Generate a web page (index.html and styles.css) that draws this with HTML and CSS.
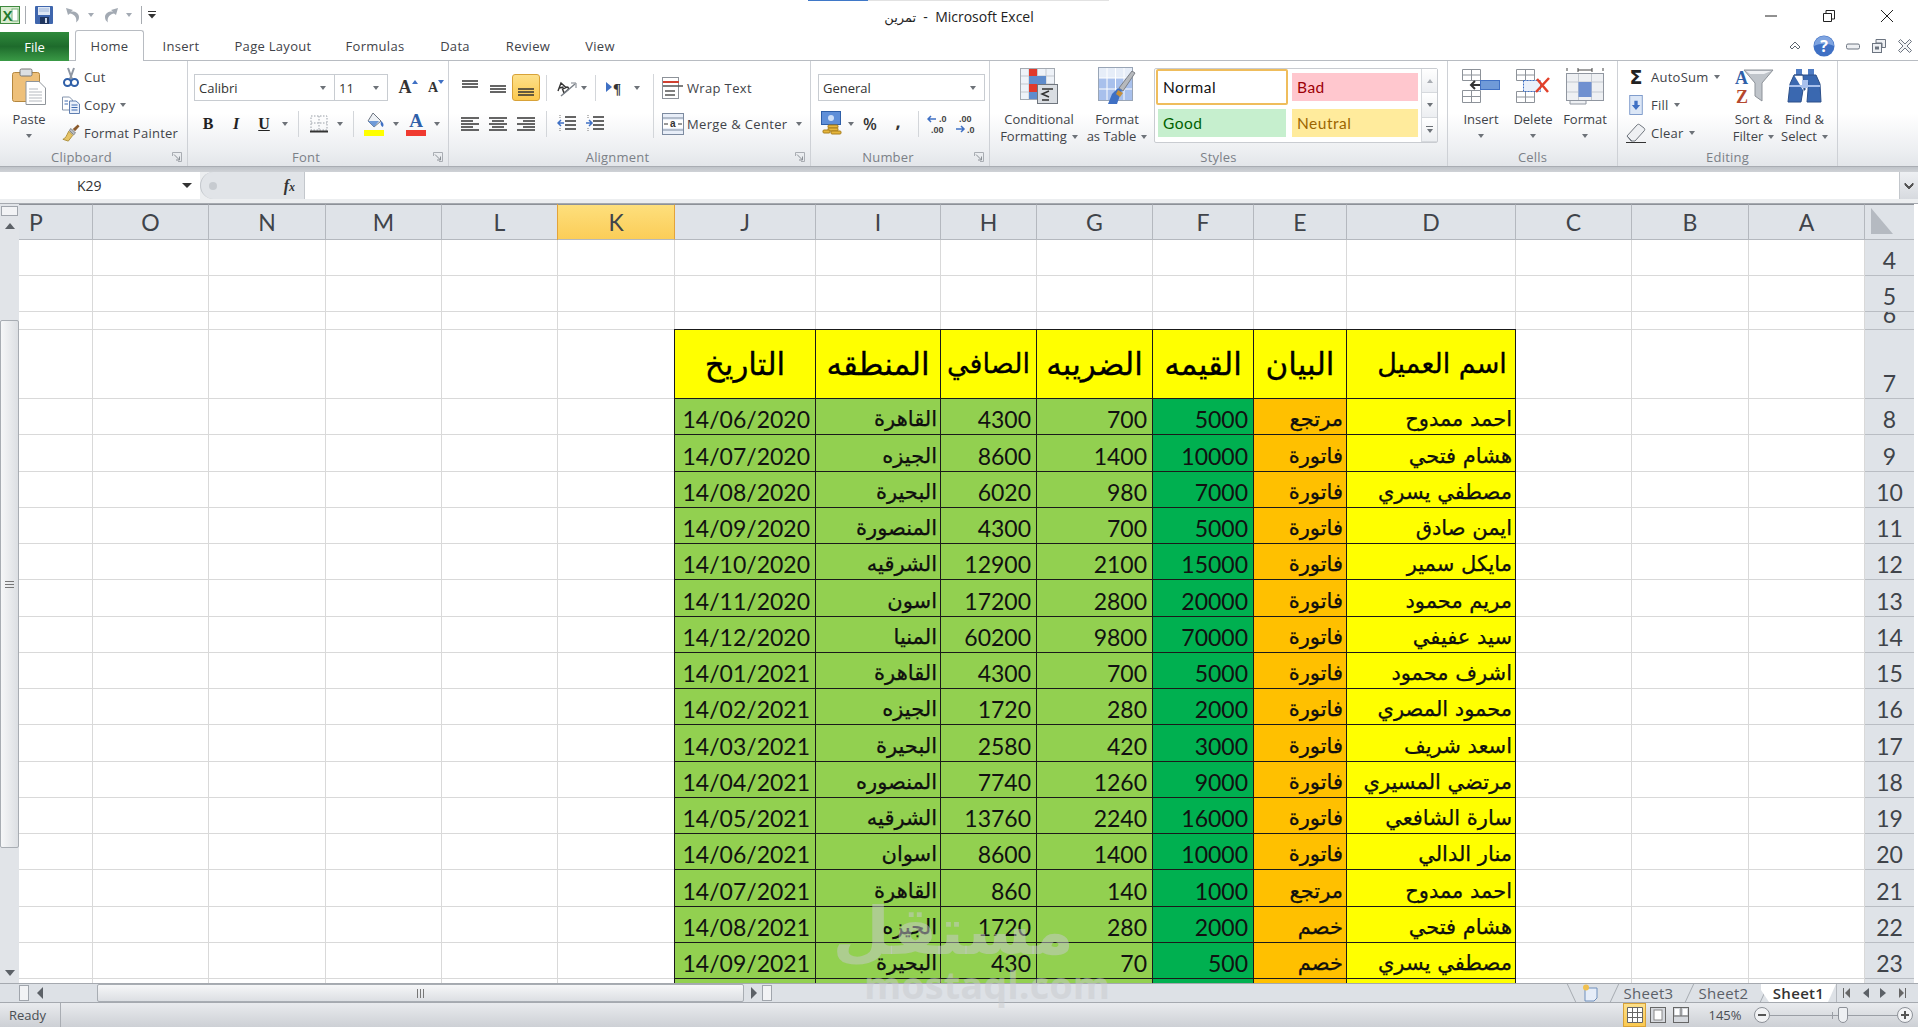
FILE: index.html
```html
<!DOCTYPE html>
<html lang="en">
<head>
<meta charset="UTF-8">
<title>تمرين - Microsoft Excel</title>
<link rel="stylesheet" href="styles.css">
</head>
<body>

<!-- shared small icons -->
<svg class="defs">
  <symbol id="launcher" viewBox="0 0 10 10"><path d="M.5 4V.5H9.500V9.500H6" fill="none" stroke="#a9adb3"/><path d="M2 2.500L7.500 8M7.500 4.500V8H4" fill="none" stroke="#8b9096"/></symbol>
  <symbol id="al-left" viewBox="0 0 20 16"><path d="M1 2H19M1 5H13M1 8H19M1 11H13M1 14H19" stroke="#333" stroke-width="1.400"/></symbol>
  <symbol id="al-center" viewBox="0 0 20 16"><path d="M1 2H19M4 5H16M1 8H19M4 11H16M1 14H19" stroke="#333" stroke-width="1.400"/></symbol>
  <symbol id="al-right" viewBox="0 0 20 16"><path d="M1 2H19M7 5H19M1 8H19M7 11H19M1 14H19" stroke="#333" stroke-width="1.400"/></symbol>
</svg>

<div class="load-strip"><div class="load-strip-bar"></div></div>
<header class="titlebar">
  <div class="qat">
    <svg class="qat-logo" viewBox="0 0 20 18"><rect x=".5" y=".5" width="19" height="17" fill="#d8ecd0" stroke="#3f8a3f"/><rect x="12" y="3" width="6" height="12" fill="#fff" stroke="#7ab07a"/><text x="7.500" y="15" class="qat-logo-x">X</text></svg>
    <span class="qat-sep"></span>
    <svg class="qat-save" viewBox="0 0 18 18"><rect width="18" height="18" rx="1" fill="#3f66ad"/><rect x="3" y="1" width="12" height="8" fill="#dfe8f5"/><path d="M4 3H14M4 5H14" stroke="#9db4d8"/><rect x="5" y="11" width="9" height="7" fill="#20355e"/><rect x="10" y="12" width="2" height="5" fill="#cfd8e8"/></svg>
    <svg class="qat-undo" viewBox="0 0 16 16"><path d="M3 8L1 1L8 3L6 4.500C10 4 14 6 14 10C14 12.500 13 14 11 15.500C12 12.500 11 7.500 5 6.500Z" fill="#a3aab3"/></svg>
    <i class="dd dd-light qat-dd"></i>
    <svg class="qat-redo" viewBox="0 0 16 16"><path d="M13 8L15 1L8 3L10 4.500C6 4 2 6 2 10C2 12.500 3 14 5 15.500C4 12.500 5 7.500 11 6.500Z" fill="#a3aab3"/></svg>
    <i class="dd dd-light qat-dd"></i>
    <span class="qat-sep qat-sep-b"></span>
    <svg class="qat-more" viewBox="0 0 9 8"><path d="M0 .5H8" stroke="#333"/><path d="M0 3H8L4 7.500Z" fill="#333"/></svg>
  </div>
  <div class="doc-title"><span dir="rtl" class="doc-name">تمرين</span>&nbsp; - &nbsp;Microsoft Excel</div>
  <div class="win-controls">
    <span class="win-btn"><svg viewBox="0 0 12 12"><path d="M0 6H12" stroke="#222"/></svg></span>
    <span class="win-btn"><svg viewBox="0 0 12 12"><path d="M.5 3.500H8.500V11.500H.5ZM3 3.500V.5H11.500V9H8.500" fill="none" stroke="#222"/></svg></span>
    <span class="win-btn"><svg viewBox="0 0 12 12"><path d="M0 0L12 12M12 0L0 12" stroke="#222"/></svg></span>
  </div>
</header>

<nav class="tabs">
  <div class="tab-file">File</div>
  <div class="tab tab-home">Home</div>
  <div class="tab tab-insert">Insert</div>
  <div class="tab tab-layout">Page Layout</div>
  <div class="tab tab-formulas">Formulas</div>
  <div class="tab tab-data">Data</div>
  <div class="tab tab-review">Review</div>
  <div class="tab tab-view">View</div>
  <div class="tabs-right">
    <svg class="ic16" viewBox="0 0 16 16"><path d="M3 9L8 4L13 9L11 11L8 8L5 11Z" fill="#fff" stroke="#5c6670"/></svg>
    <svg class="ic-help" viewBox="0 0 22 22"><circle cx="11" cy="11" r="10.500" fill="#3f70c4"/><path d="M1 11A10 10 0 0 1 21 11C15 8 7 8 1 11Z" fill="#7fa4e0"/><text x="11" y="17" class="help-q">?</text></svg>
    <svg class="ic16" viewBox="0 0 16 16"><rect x="1.500" y="6" width="13" height="5" rx="1.500" fill="#eef0f3" stroke="#6c7480"/></svg>
    <svg class="ic16" viewBox="0 0 16 16"><path d="M5 1.500H14.500V9.500H11V5H5Z" fill="#eef0f3" stroke="#6c7480"/><rect x="1.500" y="5.500" width="9" height="9" fill="#eef0f3" stroke="#6c7480"/><rect x="4" y="8.500" width="4" height="3" fill="#6c7480"/></svg>
    <svg class="ic16" viewBox="0 0 16 16"><path d="M1.500 3.500L3.500 1.500L8 6L12.500 1.500L14.500 3.500L10 8L14.500 12.500L12.500 14.500L8 10L3.500 14.500L1.500 12.500L6 8Z" fill="#f2f3f5" stroke="#6c7480"/></svg>
  </div>
</nav>

<section class="ribbon">
  <!-- Clipboard -->
  <div class="grp grp-clipboard">
    <div class="grp-body">
      <div class="big big-paste">
        <div class="big-icon">
          <svg width="34" height="37" viewBox="0 0 34 37"><rect x=".5" y="4.500" width="27" height="29" rx="2" fill="#eec07a" stroke="#b4873f"/><rect x="8" y="1" width="12" height="7" rx="1.500" fill="#dcdfe3" stroke="#777"/><path d="M14 36.500V13.500H27L33.500 20V36.500Z" fill="#fff" stroke="#8f949a"/><path d="M17 21H26M17 24H30M17 27H30M17 30H30M17 33H30" stroke="#b5b9bf"/></svg>
        </div>
        <div class="big-text">Paste</div>
        <i class="dd"></i>
      </div>
      <div class="small-list">
        <div class="small-row">
          <svg class="small-icon" viewBox="0 0 18 20"><path d="M6 1L10 12M12 1L8 12" stroke="#8f97a3" stroke-width="2"/><ellipse cx="5.500" cy="15.500" rx="3.500" ry="3.500" fill="none" stroke="#2f5fa8" stroke-width="2"/><ellipse cx="12.500" cy="15.500" rx="3.500" ry="3.500" fill="none" stroke="#2f5fa8" stroke-width="2"/></svg>
          <span>Cut</span>
        </div>
        <div class="small-row">
          <svg class="small-icon" viewBox="0 0 18 18"><path d="M.5 1H7.500L10.500 4V14H.5Z" fill="#fff" stroke="#8696ae"/><path d="M7.500 5H14L17.500 8V17.500H7.500Z" fill="#eaf0fa" stroke="#5f7eb0"/><path d="M9.500 9H15.500M9.500 11.500H15.500M9.500 14H15.500M2.500 5H6M2.500 8H6" stroke="#3f6bb0"/></svg>
          <span>Copy</span><i class="dd dd-gap"></i>
        </div>
        <div class="small-row">
          <svg class="small-icon" viewBox="0 0 20 20"><path d="M7.500 8L12 12.500L7 19L1 17C4 16 5 13 7.500 8Z" fill="#e7c466" stroke="#a88a34"/><path d="M8 7L13 12L15 10L10 5Z" fill="#b8bcc2" stroke="#777"/><path d="M12 5.500L17.500.5L19.500 2.500L14.500 8Z" fill="#8a5a2c"/></svg>
          <span>Format Painter</span>
        </div>
      </div>
    </div>
    <div class="grp-label"><span>Clipboard</span><svg class="launcher"><use href="#launcher"/></svg></div>
  </div>

  <!-- Font -->
  <div class="grp grp-font">
    <div class="grp-body grp-stack">
      <div class="tool-row">
        <div class="combo combo-font"><span>Calibri</span><i class="dd"></i></div>
        <div class="combo combo-size"><span>11</span><i class="dd"></i></div>
        <div class="tool w-grow"><span class="grow-a">A</span><i class="tick tick-up"></i></div>
        <div class="tool w-shrink"><span class="shrink-a">A</span><i class="tick tick-down"></i></div>
      </div>
      <div class="tool-row tool-row-b">
        <div class="tool w28 fmt fmt-b">B</div>
        <div class="tool w28 fmt fmt-i">I</div>
        <div class="tool w28 fmt fmt-u">U</div>
        <div class="tool w14"><i class="dd"></i></div>
        <span class="vsep"></span>
        <div class="tool w28"><svg width="18" height="18" viewBox="0 0 18 18"><path d="M1 1H17V15H1ZM9 1V15M1 8H17" fill="none" stroke="#9aa0a8" stroke-dasharray="1.500 1.500"/><path d="M0 16.500H18" stroke="#333" stroke-width="2"/></svg></div>
        <div class="tool w14"><i class="dd"></i></div>
        <span class="vsep"></span>
        <div class="tool w30"><svg width="22" height="24" viewBox="0 0 22 24"><path d="M9 1L17 9L10 15L4 9Z" fill="#eef1f5" stroke="#6c7480"/><path d="M4 9H15L10 15Z" fill="#6f9ad8"/><path d="M17 9C20 11 20 14 18.500 15C17 14 16 12 17 9Z" fill="#3f70c4"/><rect x="0" y="18" width="20" height="6" fill="#ffff00"/></svg></div>
        <div class="tool w12"><i class="dd"></i></div>
        <div class="tool w28 fc"><span class="fc-a">A</span><i class="fc-bar"></i></div>
        <div class="tool w14"><i class="dd"></i></div>
      </div>
    </div>
    <div class="grp-label"><span>Font</span><svg class="launcher"><use href="#launcher"/></svg></div>
  </div>

  <!-- Alignment -->
  <div class="grp grp-align">
    <div class="grp-body">
      <div class="grp-stack align-tools">
        <div class="tool-row">
          <div class="tool w28"><svg width="20" height="18" viewBox="0 0 20 18"><path d="M2 2H18M2 5H18M2 8H18" stroke="#333" stroke-width="1.400"/></svg></div>
          <div class="tool w28"><svg width="20" height="18" viewBox="0 0 20 18"><path d="M2 7H18M2 10H18M2 13H18" stroke="#333" stroke-width="1.400"/></svg></div>
          <div class="tool w28 tool-on"><svg width="20" height="18" viewBox="0 0 20 18"><path d="M2 10H18M2 13H18M2 16H18" stroke="#333" stroke-width="1.400"/></svg></div>
          <span class="vsep"></span>
          <div class="tool w26"><svg width="22" height="20" viewBox="0 0 22 20"><path d="M3 13L6 5L11 9.500M4.200 10L8.500 9M9 15L7.500 11L12 9C14 9 14 11.500 12 12.500Z" fill="none" stroke="#333" stroke-width="1.400"/><path d="M6 18L20 6" stroke="#7a8088" stroke-width="1.500"/><path d="M16 5H21V10" fill="none" stroke="#7a8088"/></svg></div>
          <div class="tool w10"><i class="dd"></i></div>
          <span class="vsep"></span>
          <div class="tool w28"><svg width="20" height="16" viewBox="0 0 20 16"><path d="M0 2L6 7L0 12Z" fill="#3f70c4"/><text x="7" y="14" class="pilcrow">¶</text></svg></div>
          <div class="tool w14"><i class="dd"></i></div>
        </div>
        <div class="tool-row tool-row-b">
          <div class="tool w28"><svg width="20" height="16"><use href="#al-left"/></svg></div>
          <div class="tool w28"><svg width="20" height="16"><use href="#al-center"/></svg></div>
          <div class="tool w28"><svg width="20" height="16"><use href="#al-right"/></svg></div>
          <span class="vsep"></span>
          <div class="tool w28"><svg width="20" height="20" viewBox="0 0 20 20"><path d="M8 3H19M8 7H19M8 11H19M8 15H19" stroke="#333" stroke-width="1.500"/><path d="M7 9H1M4 6L1 9L4 12" fill="none" stroke="#3f70c4" stroke-width="1.500"/><path d="M3 1V4M3 14V18" stroke="#777" stroke-dasharray="1 1"/></svg></div>
          <div class="tool w28"><svg width="20" height="20" viewBox="0 0 20 20"><path d="M8 3H19M8 7H19M8 11H19M8 15H19" stroke="#333" stroke-width="1.500"/><path d="M1 9H7M4 6L7 9L4 12" fill="none" stroke="#3f70c4" stroke-width="1.500"/><path d="M3 1V4M3 14V18" stroke="#777" stroke-dasharray="1 1"/></svg></div>
        </div>
      </div>
      <span class="vsep vsep-tall"></span>
      <div class="grp-stack align-text">
        <div class="tool-row tool-row-text">
          <svg width="22" height="22" viewBox="0 0 22 22"><rect x=".5" y=".5" width="16" height="21" fill="#fff" stroke="#8d9299"/><path d="M1 5H17" stroke="#d04030" stroke-width="2"/><path d="M1 9H21" stroke="#555" stroke-width="1.500"/><path d="M3 14H13M3 18H13" stroke="#555" stroke-width="1.500"/></svg>
          <span>Wrap Text</span>
        </div>
        <div class="tool-row tool-row-text tool-row-b">
          <svg width="22" height="22" viewBox="0 0 22 22"><rect x=".5" y=".5" width="21" height="21" fill="#e8eef8" stroke="#7d8ba0"/><path d="M1 5H21M1 17H21" stroke="#7d8ba0"/><rect x="1" y="7" width="20" height="8" fill="#fff"/><text x="11" y="14" class="merge-a">a</text><path d="M2 11H6M20 11H16" stroke="#333"/></svg>
          <span>Merge &amp; Center</span><i class="dd dd-gap"></i>
        </div>
      </div>
    </div>
    <div class="grp-label"><span>Alignment</span><svg class="launcher"><use href="#launcher"/></svg></div>
  </div>

  <!-- Number -->
  <div class="grp grp-number">
    <div class="grp-body grp-stack">
      <div class="tool-row">
        <div class="combo combo-num"><span>General</span><i class="dd"></i></div>
      </div>
      <div class="tool-row tool-row-b">
        <div class="tool w28"><svg width="22" height="25" viewBox="0 0 22 25"><rect x=".5" y=".5" width="19" height="13" fill="#5f8fd8" stroke="#2f5fa8"/><circle cx="10" cy="7" r="3" fill="#cfe0f8"/><rect x="7" y="14" width="10" height="3" rx="1" fill="#e6b63c" stroke="#a97f1c"/><rect x="7" y="17" width="10" height="3" rx="1" fill="#e6b63c" stroke="#a97f1c"/><rect x="10" y="20" width="10" height="3" rx="1" fill="#e6b63c" stroke="#a97f1c"/><rect x="2" y="19" width="7" height="3" rx="1" fill="#e6b63c" stroke="#a97f1c"/></svg></div>
        <div class="tool w10"><i class="dd"></i></div>
        <div class="tool w28 num-sym num-pct">%</div>
        <div class="tool w28 num-sym num-comma">,</div>
        <span class="vsep"></span>
        <div class="tool w28 dec"><svg width="24" height="22" viewBox="0 0 24 22"><path d="M1 6H9M4 3L1 6L4 9" fill="none" stroke="#3f70c4" stroke-width="1.500"/><text x="12" y="9" class="dec-t">.0</text><text x="4" y="20" class="dec-t">.00</text></svg></div>
        <div class="tool w28 dec"><svg width="24" height="22" viewBox="0 0 24 22"><text x="4" y="9" class="dec-t">.00</text><path d="M1 16H9M6 13L9 16L6 19" fill="none" stroke="#3f70c4" stroke-width="1.500"/><text x="12" y="20" class="dec-t">.0</text></svg></div>
      </div>
    </div>
    <div class="grp-label"><span>Number</span><svg class="launcher"><use href="#launcher"/></svg></div>
  </div>

  <!-- Styles -->
  <div class="grp grp-styles">
    <div class="grp-body">
      <div class="big big-cond">
        <div class="big-icon">
          <svg width="38" height="36" viewBox="0 0 38 36"><rect x=".5" y=".5" width="34" height="31" fill="#eef2f8" stroke="#a4aab2"/><path d="M9 1V31M17.500 1V31M26 1V31M1 8H34M1 16H34M1 24H34" stroke="#c4c9d0"/><rect x="9" y="1" width="8" height="7" fill="#e0392b"/><rect x="9" y="8" width="17" height="8" fill="#5f8ccc"/><rect x="9" y="16" width="8" height="8" fill="#e0392b"/><rect x="9" y="24" width="15" height="7" fill="#5f8ccc"/><rect x="17.500" y="16.500" width="20" height="19" fill="#d9dde2" stroke="#70767e"/><path d="M22 21L33 21M29 23L22 26L29 29M22 32H29" fill="none" stroke="#333" stroke-width="1.500"/></svg>
        </div>
        <div class="big-text">Conditional</div>
        <div class="big-text">Formatting<i class="dd dd-gap"></i></div>
      </div>
      <div class="big big-table">
        <div class="big-icon">
          <svg width="38" height="38" viewBox="0 0 38 38"><rect x=".5" y=".5" width="34" height="33" fill="#e6edf8" stroke="#99a5b6"/><rect x="1" y="11" width="33" height="22" fill="#a8c0ec"/><path d="M9 1V33M17.500 1V33M26 1V33M1 11H34M1 22H34" stroke="#fff"/><path d="M37 6L25 24L21 21L34 4Z" fill="#b6b9bd" stroke="#7b7f85"/><path d="M24 23L19 37H10L14 27L20 21Z" fill="#3f70c4"/><path d="M20 23L25 26L22 30L18 27Z" fill="#c48f3c"/></svg>
        </div>
        <div class="big-text">Format</div>
        <div class="big-text">as Table<i class="dd dd-gap"></i></div>
      </div>
      <div class="gallery">
        <div class="gallery-cells">
          <div class="style-wrap style-wrap-on"><div class="style-cell style-normal">Normal</div></div>
          <div class="style-wrap"><div class="style-cell style-bad">Bad</div></div>
          <div class="style-wrap"><div class="style-cell style-good">Good</div></div>
          <div class="style-wrap"><div class="style-cell style-neutral">Neutral</div></div>
        </div>
        <div class="gallery-scroll">
          <div class="gallery-btn"><i class="tri-up"></i></div>
          <div class="gallery-btn"><i class="dd"></i></div>
          <div class="gallery-btn gallery-more"><i class="more-line"></i><i class="dd"></i></div>
        </div>
      </div>
    </div>
    <div class="grp-label grp-label-plain"><span>Styles</span></div>
  </div>

  <!-- Cells -->
  <div class="grp grp-cells">
    <div class="grp-body">
      <div class="big big-cell">
        <div class="big-icon">
          <svg width="38" height="34" viewBox="0 0 38 34"><path d="M.5.500H18.500V11.500H.5ZM9.500.5V11.500M.5 6H18.500" fill="#fff" stroke="#8d9299"/><path d="M.5 21.500H18.500V33.500H.5ZM9.500 21.500V33.500M.5 27.500H18.500" fill="#fff" stroke="#8d9299"/><rect x="18.500" y="11.500" width="19" height="9" fill="#6f9ad8" stroke="#3f70c4"/><path d="M18 16H9M13 12L9 16L13 20" fill="none" stroke="#333" stroke-width="2"/></svg>
        </div>
        <div class="big-text">Insert</div>
        <i class="dd"></i>
      </div>
      <div class="big big-cell">
        <div class="big-icon">
          <svg width="34" height="34" viewBox="0 0 34 34"><path d="M.5.500H18.500V11.500H.5ZM9.500.5V11.500M.5 6H18.500" fill="#fff" stroke="#8d9299"/><path d="M.5 22.500H18.500V33.500H.5ZM9.500 22.500V33.500M.5 28H18.500" fill="#fff" stroke="#8d9299"/><rect x="7.500" y="11.500" width="17" height="11" fill="#eaf0fa" stroke="#3f70c4" stroke-dasharray="2 1"/><path d="M21 10L32 23M33 9L20 23" stroke="#e2402a" stroke-width="2.500"/></svg>
        </div>
        <div class="big-text">Delete</div>
        <i class="dd"></i>
      </div>
      <div class="big big-cell">
        <div class="big-icon">
          <svg width="38" height="38" viewBox="0 0 38 38"><path d="M1 1V4M37 1V4M12 3H26M12 1V5M26 1V5" stroke="#444" fill="none"/><rect x=".5" y="6.500" width="37" height="27" fill="#eef0f3" stroke="#9096a0"/><path d="M12.500 7V33M25.500 7V33M1 15H37M1 25H37" stroke="#c4c9d0"/><rect x="12.500" y="15" width="13" height="15" fill="#6f90d0"/><path d="M4 34V37H20V34" fill="#eef0f3" stroke="#9096a0"/></svg>
        </div>
        <div class="big-text">Format</div>
        <i class="dd"></i>
      </div>
    </div>
    <div class="grp-label grp-label-plain"><span>Cells</span></div>
  </div>

  <!-- Editing -->
  <div class="grp grp-editing">
    <div class="grp-body">
      <div class="small-list edit-list">
        <div class="small-row">
          <span class="small-icon sigma">Σ</span>
          <span>AutoSum</span><i class="dd dd-gap"></i>
        </div>
        <div class="small-row">
          <svg class="small-icon" viewBox="0 0 20 24"><rect x="2.500" y=".5" width="15" height="23" fill="#dbe6f6" stroke="#6c8dc4"/><path d="M8 7H12V12H15L10 18L5 12H8Z" fill="#3f70c4"/></svg>
          <span>Fill</span><i class="dd dd-gap"></i>
        </div>
        <div class="small-row">
          <svg class="small-icon" viewBox="0 0 20 20"><path d="M1 13L11 2C12 1 13 1 14 2L18 5C19 6 19 7 18 8L9 18H5Z" fill="#eef0f3" stroke="#70767e"/><path d="M1 13L6 18" stroke="#70767e"/><path d="M0 19.500H20" stroke="#333"/></svg>
          <span>Clear</span><i class="dd dd-gap"></i>
        </div>
      </div>
      <div class="big big-edit">
        <div class="big-icon">
          <svg width="40" height="38" viewBox="0 0 40 38"><path d="M10 3H39L28 16V34L21 29V16Z" fill="#bfc4ca" stroke="#8d9299"/><path d="M12 4H37L30 7H16Z" fill="#eef0f3"/><text x="1" y="17" class="sort-a">A</text><text x="2" y="36" class="sort-z">Z</text></svg>
        </div>
        <div class="big-text">Sort &amp;</div>
        <div class="big-text">Filter<i class="dd dd-gap"></i></div>
      </div>
      <div class="big big-edit">
        <div class="big-icon">
          <svg width="36" height="36" viewBox="0 0 36 36"><rect x="9" y="1" width="6" height="6" fill="#4f7cc4"/><rect x="21" y="1" width="6" height="6" fill="#4f7cc4"/><path d="M7 7H16L17 22H18V14H21V22L20 34H34L33 16L29 7H20ZM7 7L3 16L1 34H14L16 22" fill="#3a68b0" stroke="#2c4f88"/><rect x="15" y="12" width="6" height="8" fill="#a8c0ec"/><path d="M2 18H15M21 18H33" stroke="#a8c0ec" stroke-width="2"/><path d="M17 23V34H19V23Z" fill="#fff"/></svg>
        </div>
        <div class="big-text">Find &amp;</div>
        <div class="big-text">Select<i class="dd dd-gap"></i></div>
      </div>
    </div>
    <div class="grp-label grp-label-plain"><span>Editing</span></div>
  </div>
</section>

<div class="formula-bar">
  <div class="name-box"><span>K29</span><i class="dd dd-dark"></i></div>
  <div class="fx-box"><i class="fx-dot"></i><span class="fx">f<small>x</small></span></div>
  <div class="formula-input"></div>
  <div class="formula-btn"><svg width="10" height="8" viewBox="0 0 10 8"><path d="M1 1L5 5L9 1V3L5 7L1 3Z" fill="#555" stroke="#555"/></svg></div>
</div>

<main class="workspace">
  <aside class="vscroll">
    <div class="split-v"></div>
    <div class="vscroll-btn"><i class="tri-up tri-up-lg"></i></div>
    <div class="vscroll-track"><div class="vscroll-thumb"><i class="grip-h"></i></div></div>
    <div class="vscroll-btn"><i class="dd dd-lg"></i></div>
  </aside>
  <div class="sheet-view">
    <table class="sheet">
      <colgroup>
        <col class="col-p"><col class="col-o"><col class="col-n"><col class="col-m"><col class="col-l"><col class="col-k"><col class="col-j"><col class="col-i"><col class="col-h"><col class="col-g"><col class="col-f"><col class="col-e"><col class="col-d"><col class="col-c"><col class="col-b"><col class="col-a"><col class="col-rn">
      </colgroup>
      <thead>
        <tr class="row-head">
          <th class="th-p">P</th><th>O</th><th>N</th><th>M</th><th>L</th><th class="th-on">K</th><th>J</th><th>I</th><th>H</th><th>G</th><th>F</th><th>E</th><th>D</th><th>C</th><th>B</th><th>A</th>
          <th class="corner"><svg width="36" height="28" viewBox="0 0 36 28"><path d="M2 1L24 27H2Z" fill="#b5bac1"/></svg></th>
        </tr>
      </thead>
      <tbody>
        <tr class="row-std"><td></td><td></td><td></td><td></td><td></td><td></td><td></td><td></td><td></td><td></td><td></td><td></td><td></td><td></td><td></td><td></td><th class="rn">4</th></tr>
        <tr class="row-std"><td></td><td></td><td></td><td></td><td></td><td></td><td></td><td></td><td></td><td></td><td></td><td></td><td></td><td></td><td></td><td></td><th class="rn">5</th></tr>
        <tr class="row-thin"><td></td><td></td><td></td><td></td><td></td><td></td><td></td><td></td><td></td><td></td><td></td><td></td><td></td><td></td><td></td><td></td><th class="rn"><div class="rn-clip">6</div></th></tr>
        <tr class="row-title"><td></td><td></td><td></td><td></td><td></td><td></td>
          <td class="hd hd-first">التاريخ</td><td class="hd">المنطقه</td><td class="hd hd-tight">الصافي</td><td class="hd">الضريبه</td><td class="hd">القيمه</td><td class="hd">البيان</td><td class="hd hd-tight hd-name">اسم العميل</td>
          <td></td><td></td><td></td><th class="rn">7</th></tr>
        <tr class="row-data"><td></td><td></td><td></td><td></td><td></td><td></td><td class="cell g first">14/06/2020</td><td class="cell g ar">القاهرة</td><td class="cell g">4300</td><td class="cell g">700</td><td class="cell dg">5000</td><td class="cell o ar">مرتجع</td><td class="cell y ar">احمد ممدوح</td><td></td><td></td><td></td><th class="rn">8</th></tr>
        <tr class="row-data"><td></td><td></td><td></td><td></td><td></td><td></td><td class="cell g first">14/07/2020</td><td class="cell g ar">الجيزه</td><td class="cell g">8600</td><td class="cell g">1400</td><td class="cell dg">10000</td><td class="cell o ar">فاتورة</td><td class="cell y ar">هشام فتحي</td><td></td><td></td><td></td><th class="rn">9</th></tr>
        <tr class="row-data"><td></td><td></td><td></td><td></td><td></td><td></td><td class="cell g first">14/08/2020</td><td class="cell g ar">البحيرة</td><td class="cell g">6020</td><td class="cell g">980</td><td class="cell dg">7000</td><td class="cell o ar">فاتورة</td><td class="cell y ar">مصطفي يسري</td><td></td><td></td><td></td><th class="rn">10</th></tr>
        <tr class="row-data"><td></td><td></td><td></td><td></td><td></td><td></td><td class="cell g first">14/09/2020</td><td class="cell g ar">المنصورة</td><td class="cell g">4300</td><td class="cell g">700</td><td class="cell dg">5000</td><td class="cell o ar">فاتورة</td><td class="cell y ar">ايمن صادق</td><td></td><td></td><td></td><th class="rn">11</th></tr>
        <tr class="row-data"><td></td><td></td><td></td><td></td><td></td><td></td><td class="cell g first">14/10/2020</td><td class="cell g ar">الشرقيه</td><td class="cell g">12900</td><td class="cell g">2100</td><td class="cell dg">15000</td><td class="cell o ar">فاتورة</td><td class="cell y ar">مايكل سمير</td><td></td><td></td><td></td><th class="rn">12</th></tr>
        <tr class="row-data"><td></td><td></td><td></td><td></td><td></td><td></td><td class="cell g first">14/11/2020</td><td class="cell g ar">اسون</td><td class="cell g">17200</td><td class="cell g">2800</td><td class="cell dg">20000</td><td class="cell o ar">فاتورة</td><td class="cell y ar">مريم محمود</td><td></td><td></td><td></td><th class="rn">13</th></tr>
        <tr class="row-data"><td></td><td></td><td></td><td></td><td></td><td></td><td class="cell g first">14/12/2020</td><td class="cell g ar">المنيا</td><td class="cell g">60200</td><td class="cell g">9800</td><td class="cell dg">70000</td><td class="cell o ar">فاتورة</td><td class="cell y ar">سيد عفيفي</td><td></td><td></td><td></td><th class="rn">14</th></tr>
        <tr class="row-data"><td></td><td></td><td></td><td></td><td></td><td></td><td class="cell g first">14/01/2021</td><td class="cell g ar">القاهرة</td><td class="cell g">4300</td><td class="cell g">700</td><td class="cell dg">5000</td><td class="cell o ar">فاتورة</td><td class="cell y ar">اشرف محمود</td><td></td><td></td><td></td><th class="rn">15</th></tr>
        <tr class="row-data"><td></td><td></td><td></td><td></td><td></td><td></td><td class="cell g first">14/02/2021</td><td class="cell g ar">الجيزه</td><td class="cell g">1720</td><td class="cell g">280</td><td class="cell dg">2000</td><td class="cell o ar">فاتورة</td><td class="cell y ar">محمود المصري</td><td></td><td></td><td></td><th class="rn">16</th></tr>
        <tr class="row-data"><td></td><td></td><td></td><td></td><td></td><td></td><td class="cell g first">14/03/2021</td><td class="cell g ar">البحيرة</td><td class="cell g">2580</td><td class="cell g">420</td><td class="cell dg">3000</td><td class="cell o ar">فاتورة</td><td class="cell y ar">اسعد شريف</td><td></td><td></td><td></td><th class="rn">17</th></tr>
        <tr class="row-data"><td></td><td></td><td></td><td></td><td></td><td></td><td class="cell g first">14/04/2021</td><td class="cell g ar">المنصوره</td><td class="cell g">7740</td><td class="cell g">1260</td><td class="cell dg">9000</td><td class="cell o ar">فاتورة</td><td class="cell y ar">مرتضي المسيري</td><td></td><td></td><td></td><th class="rn">18</th></tr>
        <tr class="row-data"><td></td><td></td><td></td><td></td><td></td><td></td><td class="cell g first">14/05/2021</td><td class="cell g ar">الشرقيه</td><td class="cell g">13760</td><td class="cell g">2240</td><td class="cell dg">16000</td><td class="cell o ar">فاتورة</td><td class="cell y ar">سارة الشافعي</td><td></td><td></td><td></td><th class="rn">19</th></tr>
        <tr class="row-data"><td></td><td></td><td></td><td></td><td></td><td></td><td class="cell g first">14/06/2021</td><td class="cell g ar">اسوان</td><td class="cell g">8600</td><td class="cell g">1400</td><td class="cell dg">10000</td><td class="cell o ar">فاتورة</td><td class="cell y ar">منار الدالي</td><td></td><td></td><td></td><th class="rn">20</th></tr>
        <tr class="row-data"><td></td><td></td><td></td><td></td><td></td><td></td><td class="cell g first">14/07/2021</td><td class="cell g ar">القاهرة</td><td class="cell g">860</td><td class="cell g">140</td><td class="cell dg">1000</td><td class="cell o ar">مرتجع</td><td class="cell y ar">احمد ممدوح</td><td></td><td></td><td></td><th class="rn">21</th></tr>
        <tr class="row-data"><td></td><td></td><td></td><td></td><td></td><td></td><td class="cell g first">14/08/2021</td><td class="cell g ar">الجيزه</td><td class="cell g">1720</td><td class="cell g">280</td><td class="cell dg">2000</td><td class="cell o ar">خصم</td><td class="cell y ar">هشام فتحي</td><td></td><td></td><td></td><th class="rn">22</th></tr>
        <tr class="row-data"><td></td><td></td><td></td><td></td><td></td><td></td><td class="cell g first">14/09/2021</td><td class="cell g ar">البحيرة</td><td class="cell g">430</td><td class="cell g">70</td><td class="cell dg">500</td><td class="cell o ar">خصم</td><td class="cell y ar">مصطفي يسري</td><td></td><td></td><td></td><th class="rn">23</th></tr>
        <tr class="row-data"><td></td><td></td><td></td><td></td><td></td><td></td><td class="cell g first"></td><td class="cell g"></td><td class="cell g"></td><td class="cell g"></td><td class="cell dg"></td><td class="cell o"></td><td class="cell y"></td><td></td><td></td><td></td><th class="rn"></th></tr>
      </tbody>
    </table>
  </div>
</main>

<div class="hbar">
  <div class="hscroll">
    <i class="split-h"></i>
    <i class="tri-left"></i>
    <div class="hscroll-thumb"><i class="grip-v"></i></div>
    <i class="tri-right"></i>
    <i class="split-h"></i>
  </div>
  <div class="sheet-tabs">
    <div class="stab stab-new"><svg width="18" height="18" viewBox="0 0 18 18"><path d="M3 4H15V14L12 17H3Z" fill="#e6edf8" stroke="#6f8fbc"/><circle cx="4" cy="3.500" r="3" fill="#f0c050"/></svg></div>
    <div class="stab">Sheet3</div>
    <div class="stab">Sheet2</div>
    <div class="stab stab-on">Sheet1</div>
    <div class="sheet-nav">
      <svg width="8" height="10" viewBox="0 0 8 10"><path d="M.5 0V10" stroke="#666"/><path d="M7 0V10L2 5Z" fill="#666"/></svg>
      <i class="tri-left tri-sm"></i>
      <i class="tri-right tri-sm"></i>
      <svg width="8" height="10" viewBox="0 0 8 10"><path d="M7.500 0V10" stroke="#666"/><path d="M1 0V10L6 5Z" fill="#666"/></svg>
    </div>
  </div>
</div>

<footer class="statusbar">
  <span class="status-ready">Ready</span>
  <div class="status-right">
    <div class="view-btn view-btn-on"><svg width="16" height="16" viewBox="0 0 16 16"><path d="M.5.500H15.500V15.500H.5ZM5.500.5V15.500M10.500.5V15.500M.5 5.500H15.500M.5 10.500H15.500" fill="#fff" stroke="#666"/></svg></div>
    <div class="view-btn"><svg width="16" height="16" viewBox="0 0 16 16"><rect x=".5" y=".5" width="15" height="15" fill="#d6d9de" stroke="#666"/><rect x="4" y="3" width="8" height="10" fill="#fff" stroke="#888"/></svg></div>
    <div class="view-btn"><svg width="16" height="16" viewBox="0 0 16 16"><rect x=".5" y=".5" width="15" height="15" fill="#d6d9de" stroke="#666"/><path d="M8 .5V9M.5 9H15.500" stroke="#666"/><rect x="2" y="2" width="4" height="6" fill="#fff"/><rect x="10" y="2" width="4" height="6" fill="#fff"/></svg></div>
    <span class="zoom-pct">145%</span>
    <div class="zoom-btn"><i class="zoom-minus"></i></div>
    <div class="zoom-track"><i class="zoom-tick"></i><i class="zoom-thumb"></i></div>
    <div class="zoom-btn"><i class="zoom-minus"></i><i class="zoom-plus"></i></div>
  </div>
</footer>

<div class="watermark">
  <div class="wm-ar" dir="rtl">مستقل</div>
  <div class="wm-en">mostaql.com</div>
</div>

</body>
</html>
```
FILE: styles.css
```css
* { box-sizing: border-box; }
html, body { margin: 0; padding: 0; }
body {
    width: 1918px;
    height: 1027px;
    overflow: hidden;
    position: relative;
    display: flex;
    flex-direction: column;
    background: #fff;
    color: #3f4349;
    font-family: "Open Sans", "DejaVu Sans", sans-serif;
    font-size: 13px;
}
i { display: block; font-style: normal; }
svg { display: block; flex: none; }
.defs { display: none; }

/* title bar */
.load-strip { height: 1px; width: 301px; margin-left: 808px; background: #e2e2e2; flex: none; }
.load-strip-bar { height: 1px; width: 60px; background: #3f78c8; }
.titlebar { height: 30px; flex: none; display: grid; grid-template-columns: 1fr auto 1fr; align-items: center; }
.qat { display: flex; align-items: center; padding-bottom: 3px; }
.qat-logo { width: 20px; height: 18px; }
.qat-logo-x { font: bold 15px "Liberation Sans", sans-serif; fill: #1f7a2f; text-anchor: middle; }
.qat-sep { width: 1px; height: 18px; background: #a7abb0; margin-left: 5px; }
.qat-save { width: 18px; height: 18px; margin-left: 9px; }
.qat-undo, .qat-redo { width: 16px; height: 16px; }
.qat-undo { margin-left: 12px; }
.qat-redo { margin-left: 9px; }
.qat-dd { margin-left: 7px; }
.qat-sep-b { margin-left: 9px; }
.qat-more { width: 9px; height: 8px; margin-left: 6px; }
.doc-title { color: #222; font-size: 14px; white-space: nowrap; }
.doc-name { font-size: 13px; }
.win-controls { display: flex; justify-content: flex-end; padding-right: 2px; }
.win-btn { width: 58px; height: 24px; display: flex; align-items: center; justify-content: center; }
.win-btn svg { width: 12px; height: 12px; }

/* tabs */
.tabs { height: 30px; flex: none; display: flex; align-items: flex-end; border-bottom: 1px solid #b8bcc2; }
.tab-file {
    width: 69px;
    height: 29px;
    margin-right: 6px;
    margin-bottom: -1px;
    display: flex;
    align-items: center;
    justify-content: center;
    color: #fff;
    background: linear-gradient(#2f8a3c, #1e6b2c 50%, #3a9a46);
}
.tab { height: 29px; display: flex; align-items: center; justify-content: center; letter-spacing: .3px; }
.tab-home {
    width: 69px;
    height: 31px;
    margin-bottom: -1px;
    background: #fff;
    border: 1px solid #b8bcc2;
    border-bottom: 0;
    border-radius: 3px 3px 0 0;
}
.tab-insert { width: 74px; }
.tab-layout { width: 110px; }
.tab-formulas { width: 94px; }
.tab-data { width: 66px; }
.tab-review { width: 80px; }
.tab-view { width: 64px; }
.tabs-right { margin-left: auto; height: 29px; display: flex; align-items: center; gap: 10px; padding-right: 5px; }
.ic16 { width: 16px; height: 16px; }
.ic-help { width: 22px; height: 22px; }
.help-q { font: bold 16px "Open Sans", sans-serif; fill: #fff; text-anchor: middle; }

/* ribbon */
.ribbon {
    height: 106px;
    flex: none;
    display: flex;
    background: linear-gradient(#fff, #fff 50%, #eceef1 86%, #e3e6ea);
    border-bottom: 1px solid #a9adb3;
}
.grp { height: 100%; display: flex; flex-direction: column; border-right: 1px solid #ced1d6; flex: none; }
.grp-clipboard { width: 188px; }
.grp-font { width: 261px; }
.grp-align { width: 362px; }
.grp-number { width: 179px; }
.grp-styles { width: 458px; }
.grp-cells { width: 170px; }
.grp-editing { width: 220px; }
.grp-body { flex: 1; display: flex; min-height: 0; }
.grp-stack { display: flex; flex-direction: column; padding-top: 13px; }
.grp-label {
    height: 18px;
    flex: none;
    display: grid;
    grid-template-columns: 1fr auto;
    align-items: center;
    text-align: center;
    color: #7b8087;
    letter-spacing: .2px;
    padding-bottom: 1px;
}
.grp-label-plain { grid-template-columns: 1fr; }
.launcher { width: 10px; height: 10px; margin: 0 5px 0 9px; }

.grp-clipboard .grp-body { padding-left: 6px; }
.grp-font .grp-body { padding-left: 6px; padding-top: 13px; }
.grp-align .grp-body { padding-left: 7px; }
.grp-number .grp-body { padding-left: 7px; padding-top: 13px; }
.grp-styles .grp-body { padding-left: 5px; }
.grp-cells .grp-body { padding-left: 7px; }
.grp-editing .grp-body { padding-left: 8px; }

/* big buttons */
.big { display: flex; flex-direction: column; align-items: center; padding-top: 6px; flex: none; }
.big-icon { height: 38px; margin-bottom: 6px; display: flex; align-items: center; justify-content: center; }
.big-text { height: 17px; line-height: 17px; white-space: nowrap; display: flex; align-items: center; }
.big > .dd { margin-top: 6px; }
.big-paste { width: 46px; }
.big-cond { width: 88px; }
.big-table { width: 68px; }
.big-cell { width: 52px; }
.big-edit { width: 51px; }

/* small rows */
.small-list { display: flex; flex-direction: column; padding-top: 2px; margin-left: 10px; }
.small-row { height: 28px; display: flex; align-items: center; white-space: nowrap; letter-spacing: .25px; }
.small-icon { width: 18px; height: 20px; margin-right: 4px; flex: none; }
.edit-list { width: 102px; margin-left: 0; }
.edit-list .small-icon { width: 20px; margin-right: 5px; }
.sigma { color: #222; font: bold 19px/20px "DejaVu Sans", sans-serif; text-align: center; }
.sort-a { font: bold 18px "Liberation Serif", serif; fill: #2f5fa8; }
.sort-z { font: bold 18px "Liberation Serif", serif; fill: #b5482e; }

/* dropdown arrows */
.dd { width: 0; height: 0; border-left: 3.500px solid transparent; border-right: 3.500px solid transparent; border-top: 4px solid #6d7278; flex: none; }
.dd-gap { margin-left: 5px; }
.dd-light { border-top-color: #a3aab3; }
.dd-dark { border-left-width: 5px; border-right-width: 5px; border-top: 5px solid #333; }
.dd-lg { border-left-width: 5px; border-right-width: 5px; border-top: 6px solid #5c6167; }
.tri-up { width: 0; height: 0; border-left: 3.500px solid transparent; border-right: 3.500px solid transparent; border-bottom: 4px solid #a9adb3; }
.tri-up-lg { border-left-width: 5px; border-right-width: 5px; border-bottom: 6px solid #5c6167; }
.tri-left, .tri-right { width: 0; height: 0; border-top: 6px solid transparent; border-bottom: 6px solid transparent; flex: none; }
.tri-left { border-right: 6px solid #5c6167; }
.tri-right { border-left: 6px solid #5c6167; }
.tri-sm { border-top-width: 5px; border-bottom-width: 5px; }

/* toolbar rows */
.tool-row { height: 27px; display: flex; align-items: center; flex: none; }
.tool-row-b { margin-top: 9px; }
.tool { height: 27px; display: flex; align-items: center; justify-content: center; flex: none; }
.w10 { width: 10px; }
.w12 { width: 12px; }
.w14 { width: 14px; }
.w26 { width: 26px; }
.w28 { width: 28px; }
.w30 { width: 30px; }
.vsep { width: 1px; height: 26px; background: #d3d6da; margin: 0 6px; flex: none; }
.vsep-tall { height: 64px; margin: 13px 8px 0 0; }
.tool-on { background: linear-gradient(#fde08a, #fbc94f); border: 1px solid #d8a238; border-radius: 3px; }

.combo {
    height: 27px;
    display: flex;
    align-items: center;
    justify-content: space-between;
    background: #fff;
    border: 1px solid #c8ccd1;
    padding: 0 8px 0 4px;
    color: #333;
    flex: none;
}
.combo-font { width: 140px; border-right: 0; }
.combo-size { width: 54px; }
.combo-num { width: 167px; }
.w-grow { width: 28px; margin-left: 6px; }
.w-shrink { width: 28px; }
.grow-a { font: bold 18px "Liberation Serif", serif; color: #333; }
.shrink-a { font: bold 14px "Liberation Serif", serif; color: #333; }
.tick { width: 0; height: 0; border-left: 3px solid transparent; border-right: 3px solid transparent; align-self: flex-start; margin-top: 6px; }
.tick-up { border-bottom: 4px solid #3f70c4; }
.tick-down { border-top: 4px solid #3f70c4; }

.fmt { color: #222; font: bold 16px "Liberation Serif", serif; }
.fmt-i { font-style: italic; }
.fmt-u { text-decoration: underline; }
.fc { flex-direction: column; }
.fc-a { font: bold 19px/19px "Liberation Serif", serif; color: #2f5fa8; }
.fc-bar { width: 20px; height: 6px; background: #f03a30; }
.pilcrow { font: bold 15px "Liberation Serif", serif; fill: #333; }
.merge-a { font: bold 10px "Liberation Sans", sans-serif; fill: #333; text-anchor: middle; }
.dec-t { font: bold 9px "Liberation Sans", sans-serif; fill: #444; }
.num-sym { color: #333; }
.num-pct { font-size: 16px; font-weight: 600; }
.num-comma { font-size: 18px; font-weight: 700; padding-bottom: 6px; }

.align-tools { width: 197px; }
.tool-row-text { gap: 3px; white-space: nowrap; letter-spacing: .35px; }

/* style gallery */
.gallery {
    width: 284px;
    height: 75px;
    margin: 7px 0 0 3px;
    display: flex;
    background: #fff;
    border: 1px solid #c9ccd1;
    border-radius: 2px;
    flex: none;
}
.gallery-cells { flex: 1; display: grid; grid-template-columns: 134px 132px; grid-template-rows: 36px 36px; }
.style-wrap { padding: 4px 3px; }
.style-wrap-on { padding: 0 1px; }
.style-cell { height: 100%; display: flex; align-items: center; padding-left: 5px; font: 15.500px Lato, sans-serif; letter-spacing: .5px; }
.style-normal { background: #fff; color: #111; border: 2px solid #efbd5c; border-radius: 2px; }
.style-bad { background: #ffc7ce; color: #9c0006; }
.style-good { background: #c6efce; color: #006100; }
.style-neutral { background: #ffeb9c; color: #9c6500; }
.gallery-scroll { width: 17px; display: flex; flex-direction: column; border-left: 1px solid #d6d9dd; }
.gallery-btn { flex: 1; display: flex; flex-direction: column; gap: 2px; align-items: center; justify-content: center; border-bottom: 1px solid #d6d9dd; background: linear-gradient(#fff, #eceef1); }
.more-line { width: 7px; height: 1px; background: #6d7278; }

/* formula bar */
.formula-bar {
    height: 37px;
    flex: none;
    display: flex;
    padding: 5px 0;
    background: linear-gradient(#bfc3c9, #cfd2d6 5px, #eceef0 5px, #eceef0 36px, #a5a9af 36px);
}
.name-box { width: 200px; display: flex; align-items: center; padding-left: 77px; color: #333; background: #fff; font-size: 14px; }
.name-box span { width: 105px; }
.fx-box {
    width: 105px;
    display: flex;
    align-items: center;
    justify-content: space-between;
    padding: 0 9px 0 8px;
    background: #e1e4e8;
    border: 1px solid #c3c7cc;
    border-width: 0 1px 0 1px;
    border-radius: 14px 0 0 14px;
}
.fx-dot { width: 8px; height: 8px; border-radius: 50%; background: #c7cbd0; }
.fx { font: italic bold 16px "Liberation Serif", serif; color: #333; }
.fx small { font-size: 12px; }
.formula-input { flex: 1; background: #fff; }
.formula-btn { width: 19px; display: flex; align-items: center; justify-content: center; background: linear-gradient(#eef0f3, #d7dadf); border-left: 1px solid #c3c7cc; }

/* sheet area */
.workspace { height: 779px; flex: none; display: flex; overflow: hidden; }
.vscroll { width: 19px; flex: none; display: flex; flex-direction: column; background: #e1e4e8; }
.split-v { height: 10px; margin: 2px 0 0 1px; width: 17px; background: #f2f3f5; border: 1px solid #a0a5ac; flex: none; }
.vscroll-btn { height: 20px; display: flex; align-items: center; justify-content: center; flex: none; }
.vscroll-track { flex: 1; padding-top: 84px; }
.vscroll-thumb { height: 528px; display: flex; align-items: center; justify-content: center; background: linear-gradient(90deg, #f6f7f8, #dcdfe3); border: 1px solid #a8adb3; border-radius: 2px; }
.grip-h { width: 9px; height: 7px; border-top: 1px solid #777; border-bottom: 1px solid #777; background: linear-gradient(#777, #777) center / 100% 1px no-repeat; }
.sheet-view { flex: 1; overflow: hidden; }

.sheet { table-layout: fixed; border-collapse: separate; border-spacing: 0; width: 1895px; font-family: Lato, "DejaVu Sans", sans-serif; }
.col-p { width: 74px; }
.col-o { width: 116px; }
.col-n { width: 117px; }
.col-m { width: 116px; }
.col-l { width: 116px; }
.col-k { width: 117px; }
.col-j { width: 141px; }
.col-i { width: 125px; }
.col-h { width: 96px; }
.col-g { width: 116px; }
.col-f { width: 101px; }
.col-e { width: 93px; }
.col-d { width: 169px; }
.col-c { width: 116px; }
.col-b { width: 117px; }
.col-a { width: 116px; }
.col-rn { width: 49px; }

.sheet td, .sheet th { padding: 0; overflow: hidden; white-space: nowrap; }
.sheet td { border-right: 1px solid #d9d9d9; border-bottom: 1px solid #d9d9d9; }
.row-head { height: 36px; }
.row-head th {
    background: #dfe3e8;
    border-top: 1px solid #8d9198;
    border-right: 1px solid #b4b8be;
    border-bottom: 1px solid #b4b8be;
    color: #40444a;
    font-size: 23px;
    font-weight: 400;
    line-height: 30px;
}
.row-head .th-p { text-align: left; padding-left: 10px; }
.row-head .th-on { background: linear-gradient(#fedf7c, #fbcd58); border-right-color: #e3a33a; box-shadow: -1px 0 0 #e3a33a; }
.row-head .corner { border-right: 0; vertical-align: bottom; padding: 0 0 4px 4px; }
.row-std { height: 36px; }
.row-thin { height: 18px; }
.row-title { height: 69px; }
.row-data { height: 36.250px; }

.rn {
    background: #dfe3e8;
    border-bottom: 1px solid #b9bdc3;
    color: #40444a;
    font-size: 23px;
    font-weight: 400;
    line-height: 30px;
    text-align: center;
    vertical-align: bottom;
}
.rn-clip { height: 17px; overflow: hidden; display: flex; align-items: flex-end; justify-content: center; }

.sheet .hd {
    background: #ffff00;
    border-color: #1a1a1a;
    color: #000;
    font-family: "DejaVu Sans", sans-serif;
    font-size: 31px;
    line-height: 40px;
    text-align: center;
    box-shadow: 0 -1px 0 #1a1a1a;
    -webkit-text-stroke: .3px #000;
}
.sheet .hd-first { box-shadow: 0 -1px 0 #1a1a1a, -1px 0 0 #1a1a1a, -1px -1px 0 #1a1a1a; }
.sheet .hd-tight { font-size: 27px; }
.sheet .hd-name { padding-left: 22px; }

.sheet .cell {
    border-color: #1a1a1a;
    color: #111;
    font-size: 23px;
    line-height: 30px;
    text-align: right;
    vertical-align: bottom;
    padding: 0 5px 0 0;
}
.sheet .first { box-shadow: -1px 0 0 #1a1a1a; }
.sheet .ar { font-family: "DejaVu Sans", sans-serif; font-size: 21px; padding-right: 3px; -webkit-text-stroke: .25px #000; }
.g { background: #92d050; }
.dg { background: #00b050; }
.o { background: #ffc000; }
.y { background: #ffff00; }

/* scrollbar and sheet tabs */
.hbar { height: 20px; flex: none; display: flex; background: #dde1e6; border-top: 1px solid #a5a9af; border-bottom: 1px solid #a5a9af; position: relative; z-index: 1; }
.hscroll { width: 781px; flex: none; display: flex; align-items: center; padding-left: 19px; }
.split-h { width: 10px; height: 16px; background: #f2f3f5; border: 1px solid #a0a5ac; flex: none; }
.hscroll > .tri-left { margin: 0 54px 0 8px; }
.hscroll-thumb { width: 647px; height: 18px; display: flex; align-items: center; justify-content: center; background: linear-gradient(#f6f7f8, #dcdfe3); border: 1px solid #a8adb3; border-radius: 2px; flex: none; }
.grip-v { width: 7px; height: 9px; border-left: 1px solid #777; border-right: 1px solid #777; background: linear-gradient(#777, #777) center / 1px 100% no-repeat; }
.hscroll > .tri-right { margin: 0 5px 0 7px; }
.sheet-tabs { flex: 1; display: flex; justify-content: flex-end; align-items: stretch; padding-right: 6px; }
.stab { width: 75px; position: relative; display: flex; align-items: center; justify-content: center; color: #5b6068; font-size: 15px; letter-spacing: .3px; }
.stab::after { content: ""; position: absolute; right: -4px; top: 0; bottom: 0; width: 1px; background: #a6abb1; transform: skewX(-25deg); }
.stab-new { width: 40px; }
.stab-new::before { content: ""; position: absolute; left: 0; top: 0; bottom: 0; width: 1px; background: #a6abb1; transform: skewX(25deg); }
.stab-on { font-weight: 600; color: #333; background: #fff; clip-path: polygon(-4px 0, 100% 0, calc(100% - 8px) 100%, 8px 100%); }
.stab-on::after { display: none; }
.sheet-nav { width: 76px; display: flex; align-items: center; justify-content: space-around; border-left: 1px solid #b4b8be; }

/* status bar */
.statusbar { height: 24px; flex: none; display: flex; align-items: center; background: linear-gradient(#e9ebee, #cdd0d5); position: relative; z-index: 1; }
.status-ready { width: 61px; height: 100%; display: flex; align-items: center; padding-left: 9px; border-right: 1px solid #a9adb3; color: #4a4e54; }
.status-right { margin-left: auto; display: flex; align-items: center; height: 100%; padding-right: 5px; }
.view-btn { width: 23px; height: 100%; display: flex; align-items: center; justify-content: center; flex: none; }
.view-btn-on { background: linear-gradient(#fde08a, #fbc94f); border: 1px solid #d8a238; }
.zoom-pct { width: 58px; text-align: center; color: #4a4e54; margin-left: 4px; }
.zoom-btn { width: 16px; height: 16px; border-radius: 50%; border: 1px solid #8d9198; background: #f2f3f5; position: relative; flex: none; }
.zoom-minus { position: absolute; left: 3px; right: 3px; top: 6px; height: 2px; background: #555; }
.zoom-plus { position: absolute; top: 3px; bottom: 3px; left: 6px; width: 2px; background: #555; }
.zoom-track { width: 127px; height: 1px; background: #9a9ea5; position: relative; flex: none; }
.zoom-tick { position: absolute; left: 62px; top: -3px; width: 1px; height: 7px; background: #9a9ea5; }
.zoom-thumb { position: absolute; left: 68px; top: -8px; width: 10px; height: 16px; background: #eef0f3; border: 1px solid #8d9198; border-radius: 2px 2px 5px 5px; }

/* mostaql watermark over the sheet */
.watermark { position: absolute; left: 846px; top: 896px; width: 228px; text-align: center; color: rgba(200, 202, 205, .5); z-index: 2; }
.wm-ar { font: bold 66px/72px "DejaVu Sans", sans-serif; }
.wm-en { font: bold 38px/38px "Open Sans", sans-serif; margin-top: -3px; margin-left: 18px; white-space: nowrap; }
```
